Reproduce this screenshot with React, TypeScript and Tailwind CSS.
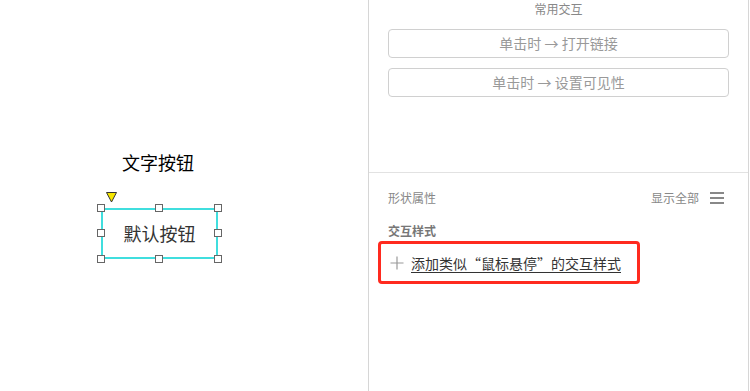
const font = "font-['Noto_Sans_CJK_SC','Microsoft_YaHei',sans-serif]";

function Handle({ className }: { className: string }) {
  return (
    <span
      className={`absolute h-[8px] w-[8px] border border-[#666] bg-white ${className}`}
    />
  );
}

function SelectedWidget() {
  return (
    <div className="relative ml-[101px] mt-[33px] h-[51px] w-[117px]">
      {/* marker */}
      <svg
        className="absolute left-[5px] top-[-16px]"
        width="11"
        height="11"
        viewBox="0 0 11 11"
      >
        <path d="M0.5 0.5 H10.5 L5.5 10 Z" fill="#f5e600" stroke="#333" strokeWidth="1" />
      </svg>
      <div className="flex h-full w-full items-center justify-center border-2 border-[#40dede] text-[18px] text-[#333]">
        默认按钮
      </div>
      <Handle className="left-[-4px] top-[-4px]" />
      <Handle className="left-[54px] top-[-4px]" />
      <Handle className="right-[-4px] top-[-4px]" />
      <Handle className="left-[-4px] top-[21px]" />
      <Handle className="right-[-4px] top-[21px]" />
      <Handle className="bottom-[-4px] left-[-4px]" />
      <Handle className="bottom-[-4px] left-[54px]" />
      <Handle className="bottom-[-4px] right-[-4px]" />
    </div>
  );
}

function ActionButton({ label }: { label: string }) {
  return (
    <div className="flex h-[29px] items-center justify-center rounded-[4px] border border-[#d0d0d0] text-[14px] text-[#999]">
      {label}
    </div>
  );
}

export default function App() {
  return (
    <div className={`flex h-[391px] w-[750px] bg-white ${font}`}>
      {/* Canvas */}
      <div className="w-[368px]">
        <div className="mt-[149px] ml-[122px] text-[18px] leading-[26px] text-black">
          文字按钮
        </div>
        <SelectedWidget />
      </div>

      {/* Inspector */}
      <div className="flex w-[381px] flex-col border-x border-[#d6d6d6]">
        <div className="text-center text-[12px] leading-[17px] text-[#888]">
          常用交互
        </div>
        <div className="flex flex-col gap-[10px] px-[19px] pt-[12px]">
          <ActionButton label="单击时 → 打开链接" />
          <ActionButton label="单击时 → 设置可见性" />
        </div>

        <div className="mt-[75px] h-px bg-[#e2e2e2]" />

        <div className="flex items-center justify-between pl-[19px] pr-[24px] pt-[16px]">
          <span className="text-[12px] leading-[17px] text-[#888]">形状属性</span>
          <div className="flex items-center gap-[11px]">
            <span className="text-[12px] leading-[17px] text-[#888]">显示全部</span>
            <div className="flex w-[14px] flex-col gap-[3px]">
              <span className="h-[2px] bg-[#888]" />
              <span className="h-[2px] bg-[#888]" />
              <span className="h-[2px] bg-[#888]" />
            </div>
          </div>
        </div>

        <div className="pl-[19px] pt-[16px] text-[12px] font-bold leading-[17px] text-[#777]">
          交互样式
        </div>

        <div className="ml-[9px] mt-[2px] flex h-[43px] w-[262px] items-center gap-[7px] rounded-[4px] border-[3px] border-[#ff2a1f] pl-[9px]">
          <svg width="14" height="14" viewBox="0 0 14 14">
            <path d="M7 0.5 V13.5 M0.5 7 H13.5" stroke="#999" strokeWidth="1.2" />
          </svg>
          <span className="text-[14px] leading-[20px] text-[#333] underline underline-offset-[3px]">
            添加类似“鼠标悬停”的交互样式
          </span>
        </div>
      </div>
    </div>
  );
}
